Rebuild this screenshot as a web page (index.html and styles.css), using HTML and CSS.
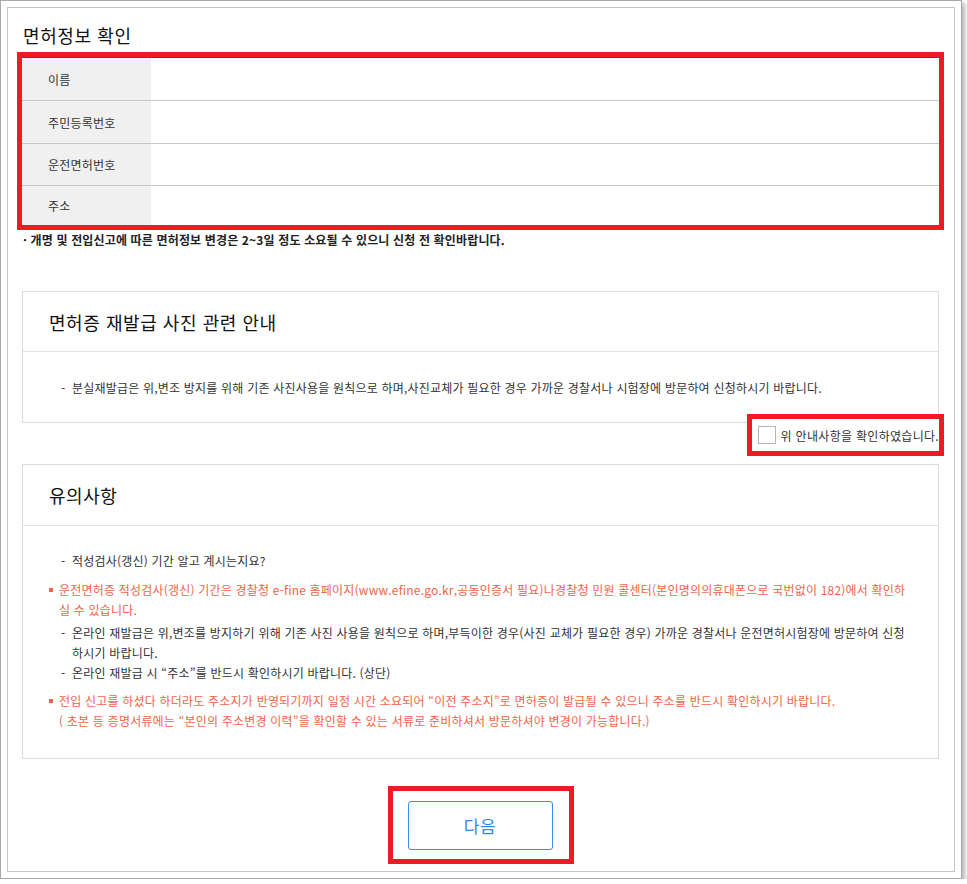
FILE: index.html
```html
<!DOCTYPE html>
<html lang="ko">
<head>
<meta charset="utf-8">
<title>면허정보 확인</title>
<link rel="stylesheet" href="styles.css">
</head>
<body>
<div class="window">
  <div class="frame">
    <h2 class="page-title">면허정보 확인</h2>
    <div class="info">
      <div class="info-row"><div class="info-label">이름</div><div class="info-value"></div></div>
      <div class="info-row"><div class="info-label">주민등록번호</div><div class="info-value"></div></div>
      <div class="info-row r3"><div class="info-label">운전면허번호</div><div class="info-value"></div></div>
      <div class="info-row r4"><div class="info-label">주소</div><div class="info-value"></div></div>
    </div>
    <p class="info-note">· 개명 및 전입신고에 따른 면허정보 변경은 2~3일 정도 소요될 수 있으니 신청 전 확인바랍니다.</p>

    <section class="box box-photo">
      <h3 class="box-title">면허증 재발급 사진 관련 안내</h3>
      <div class="box-body">
        <p class="dash">분실재발급은 위,변조 방지를 위해 기존 사진사용을 원칙으로 하며,사진교체가 필요한 경우 가까운 경찰서나 시험장에 방문하여 신청하시기 바랍니다.</p>
      </div>
    </section>

    <div class="check-row">
      <label class="check-label"><span class="checkbox"></span><span class="check-text">위 안내사항을 확인하였습니다.</span></label>
    </div>

    <section class="box box-notice">
      <h3 class="box-title">유의사항</h3>
      <div class="box-body body-notice">
        <p class="dash">적성검사(갱신) 기간 알고 계시는지요?</p>
        <p class="red red1">운전면허증 적성검사(갱신) 기간은 경찰청 e-fine 홈페이지(www.efine.go.kr,공동인증서 필요)나경찰청 민원 콜센터(본인명의의휴대폰으로 국번없이 182)에서 확인하실 수 있습니다.</p>
        <p class="dash">온라인 재발급은 위,변조를 방지하기 위해 기존 사진 사용을 원칙으로 하며,부득이한 경우(사진 교체가 필요한 경우) 가까운 경찰서나 운전면허시험장에 방문하여 신청하시기 바랍니다.</p>
        <p class="dash">온라인 재발급 시 “주소”를 반드시 확인하시기 바랍니다. (상단)</p>
        <p class="red red2">전입 신고를 하셨다 하더라도 주소지가 반영되기까지 일정 시간 소요되어 “이전 주소지”로 면허증이 발급될 수 있으니 주소를 반드시 확인하시기 바랍니다.<br>( 초본 등 증명서류에는 “본인의 주소변경 이력”을 확인할 수 있는 서류로 준비하셔서 방문하셔야 변경이 가능합니다.)</p>
      </div>
    </section>

    <div class="btn-row">
      <div class="btn-mark"><button class="btn-next" type="button">다음</button></div>
    </div>
  </div>
</div>
</body>
</html>
```

FILE: styles.css
```css
* { box-sizing: border-box; }
html, body { margin: 0; padding: 0; background: #ffffff; }
body {
  font-family: "Noto Sans CJK KR", "Noto Sans", "Liberation Sans", sans-serif;
  color: #333;
  font-size: 12px;
}
p, h2, h3 { margin: 0; font-weight: normal; }

.window {
  width: 962px;
  border: 1px solid #a9a9a9;
  padding: 6px;
  background: #fff;
  box-shadow: 3px 3px 4px rgba(0, 0, 0, 0.28);
}
.frame {
  border: 1px solid #c6c6c6;
  padding: 14px 15px 12px 14px;
}

.page-title {
  font-size: 18px;
  line-height: 26px;
  color: #111;
  letter-spacing: 0.6px;
  padding-left: 1px;
}

.info {
  margin-top: 9px;
  border-top: 1px solid #2d4f8f;
  outline: 5px solid #ed1c24;
}
.info-row {
  display: flex;
  height: 43px;
  border-bottom: 1px solid #c8c8c8;
}
.info-row.r3 { height: 42px; }
.info-row.r4 { height: 39px; border-bottom: 0; }
.info-label {
  width: 129px;
  background: #f0f0f0;
  padding-left: 26px;
  display: flex;
  align-items: center;
  font-size: 12px;
  color: #333;
  letter-spacing: 0.2px;
}
.info-value { flex: 1; }

.info-note {
  margin-top: 7px;
  line-height: 16px;
  font-size: 12px;
  font-weight: bold;
  color: #222;
  letter-spacing: 0.15px;
  padding-left: 1px;
}

.box {
  border: 1px solid #dcdcdc;
}
.box-photo { margin-top: 43px; }
.box-title {
  font-size: 18px;
  line-height: 26px;
  color: #111;
  padding: 17px 0 16px 26px;
  border-bottom: 1px solid #e2e2e2;
  letter-spacing: 0.55px;
}
.box-notice .box-title { padding-bottom: 17px; }
.box-body {
  padding: 26px 28px 24px 0;
}
.box-body p {
  line-height: 20px;
  font-size: 12px;
  letter-spacing: 0.2px;
  word-break: break-all;
}
.dash {
  padding-left: 49px;
  color: #333;
}
.dash::before {
  content: "-";
  display: inline-block;
  width: 11px;
  margin-left: -11px;
}
.red {
  padding-left: 36px;
  color: #f2644a;
}
.red::before {
  content: "";
  display: inline-block;
  width: 4px;
  height: 4px;
  background: #f2644a;
  margin-left: -10px;
  margin-right: 6px;
  vertical-align: 3px;
}
.body-notice { padding: 25px 28px 27px 0; }
.red1 { margin: 9px 0 3px; }
.red2 { margin-top: 8px; }

.check-row {
  display: flex;
  justify-content: flex-end;
  margin-top: -4px;
  height: 32px;
}
.check-label {
  display: flex;
  align-items: center;
  padding-left: 6px;
  outline: 5px solid #ed1c24;
  position: relative;
  background: #fff;
}
.checkbox {
  width: 18px;
  height: 18px;
  border: 1px solid #b5b5b5;
  background: #fff;
  margin-right: 5px;
}
.check-text {
  font-size: 12px;
  color: #333;
  letter-spacing: 0.3px;
}
.box-notice { margin-top: 13px; }

.btn-row {
  display: flex;
  justify-content: center;
  margin-top: 32px;
}
.btn-mark {
  padding: 10px 16px 9px 15px;
  outline: 5px solid #ed1c24;
}
.btn-next {
  display: block;
  width: 145px;
  height: 49px;
  border: 1px solid #3a8fe6;
  border-radius: 3px;
  background: #fff;
  color: #2f8be9;
  font-family: "Noto Sans CJK KR", "Noto Sans", sans-serif;
  font-size: 17px;
  letter-spacing: 0.5px;
  padding: 0;
}
```
